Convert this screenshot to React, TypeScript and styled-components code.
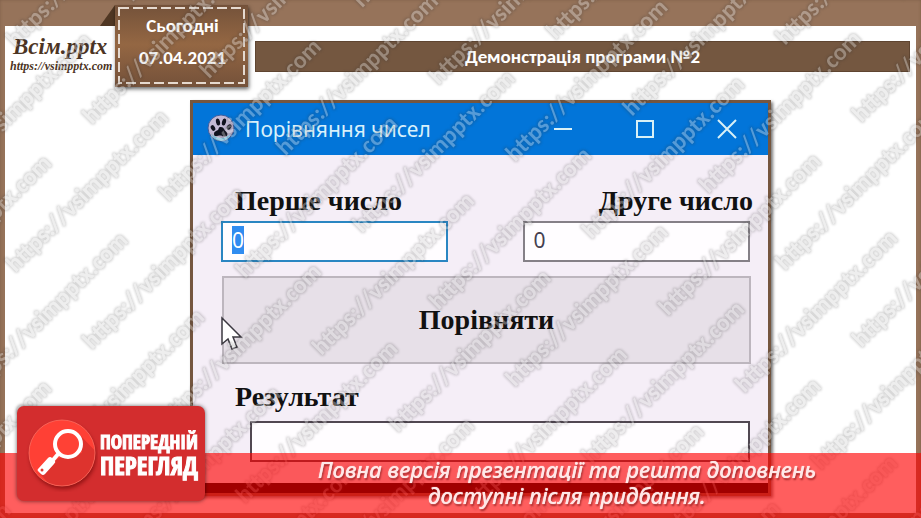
import React, { useEffect, useRef } from "react";
import styled, { createGlobalStyle } from "styled-components";

const GlobalStyle = createGlobalStyle`
  * { box-sizing: border-box; }
  body { margin: 0; background: #96735a; }
`;

const Page = styled.div`
  position: relative;
  display: flex;
  flex-direction: column;
  min-height: 100vh;
  padding: 26px 5px 5px;
  overflow: hidden;
  background: #96735a;
  box-shadow: inset 0 0 3px #7d5e47;
`;

const Slide = styled.main`
  flex: 1;
  background: #fff;
`;

const Header = styled.header`
  display: grid;
  grid-template-columns: 95px 15px 133px 1fr;
  align-items: start;
  height: 74px;
  padding-right: 6px;
`;

const Logo = styled.a`
  display: flex;
  flex-direction: column;
  padding: 9px 0 0 5px;
  color: #4c3423;
  font-family: "Liberation Serif", serif;
  font-style: italic;
  font-weight: bold;
  text-decoration: none;
  white-space: nowrap;
`;

const LogoName = styled.span`
  padding-left: 3px;
  font-size: 23px;
  line-height: 24px;
`;

const LogoUrl = styled.span`
  font-size: 12px;
  line-height: 14px;
`;

const Fold = styled.svg`
  width: 15px;
  height: 21px;
  margin-top: -21px;
`;

const Ribbon = styled.div`
  height: 82px;
  margin-top: -21px;
  padding: 2px 3px 3px;
  background: linear-gradient(#74523a, #946743 48%, #74513a);
  box-shadow: 1px 2px 4px #0009;
`;

const Stitching = styled.div`
  position: relative;
  display: flex;
  flex-direction: column;
  align-items: center;
  height: 100%;
  padding: 3px 0 0 2px;
  color: #fff;
  font: bold 19px/32px Carlito, Lato, "Open Sans", sans-serif;
`;

const Stitches = styled.svg`
  position: absolute;
  inset: 0;
  width: 100%;
  height: 100%;
`;

const Heading = styled.h1`
  margin: 15px 0 0 7px;
  height: 31px;
  border: 1px solid #5f4531;
  background: #745740;
  color: #fff;
  font: bold 19px/29px Carlito, Lato, "Open Sans", sans-serif;
  text-align: center;
`;

const Stage = styled.div`
  display: grid;
  grid-template-columns: 185fr 581fr 145fr;
`;

const Window = styled.section`
  grid-column: 2;
  padding-bottom: 10px;
  border: 3px solid #75563f;
  background: #000;
  box-shadow: 2px 2px 3px #0008;
`;

const TitleBar = styled.div`
  display: flex;
  align-items: center;
  height: 52px;
  padding: 0 21px 0 12px;
  background: #0275d9;
  color: #d8f0fb;
`;

const WindowTitle = styled.h2`
  flex: 1;
  margin: 0 0 0 8px;
  font: 400 21px/28px "Noto Sans", sans-serif;
  white-space: nowrap;
`;

const WindowControls = styled.div`
  display: flex;
  gap: 42px;
`;

const ControlButton = styled.button`
  display: block;
  width: 40px;
  height: 40px;
  padding: 0;
  border: 0;
  background: none;
  color: #d8f0f6;

  svg { display: block; margin: auto; }
`;

const Form = styled.form`
  height: 328px;
  padding: 31px 18px 0 28px;
  background: #f5eef7;
  font: bold 28px/30px "Liberation Serif", serif;
  color: #111;
`;

const FieldRow = styled.div`
  display: flex;
  justify-content: space-between;
`;

const Field = styled.div<{ $end?: boolean }>`
  display: flex;
  flex-direction: column;
  gap: 5px;
  width: 43%;
  align-items: ${(p) => (p.$end ? "flex-end" : "flex-start")};
`;

const FieldLabel = styled.label<{ $end?: boolean }>`
  display: block;
  white-space: nowrap;
  ${(p) => (p.$end ? "margin-right: -3px;" : "padding-left: 14px;")}
`;

const TextInput = styled.input<{ $active?: boolean }>`
  display: block;
  width: 100%;
  height: 41px;
  padding: 0 9px 3px;
  border: 2px solid ${(p) => (p.$active ? "#2a86c2" : "#858087")};
  border-radius: 0;
  outline: 0;
  background: #fffdff;
  color: #454050;
  font: 400 21px/26px "Noto Sans", sans-serif;

  &::selection { background: #308cf0; color: #fff; }
`;

const CompareButton = styled.button`
  display: block;
  width: 100%;
  height: 88px;
  margin: 14px 0 18px 1px;
  border: 2px solid #bdb6be;
  border-radius: 0;
  background: #e7e0e8;
  color: #111;
  font: inherit;
`;

const ResultBox = styled.output`
  display: block;
  height: 41px;
  margin: 9px 0 0 29px;
  border: 2px solid #514852;
  background: #fffdff;
`;

const Pointer = styled.svg`
  position: absolute;
  left: 220px;
  top: 316px;
`;

const Watermark = styled.svg`
  position: absolute;
  inset: 0;
  width: 100%;
  height: 100%;
  pointer-events: none;
  font: bold 24px Carlito, Lato, "Open Sans", sans-serif;
`;

const Banner = styled.footer`
  position: absolute;
  left: 0;
  right: 0;
  bottom: 0;
  height: 65px;
  padding: 3px 0 0 213px;
  background: rgba(255, 0, 0, 0.63);
  color: #ffe8e8;
  font: italic 500 22px/26px "Noto Sans", sans-serif;
  text-align: center;
  text-shadow: 0 0 1px #ffe8e8, 1px 2px 2px #6009;
`;

const BannerText = styled.p`
  margin: 0;
`;

const PreviewButton = styled.button`
  position: absolute;
  left: 17px;
  bottom: 17px;
  display: flex;
  align-items: center;
  width: 188px;
  height: 95px;
  padding: 0 4px 0 9px;
  border: 0;
  border-radius: 7px;
  background: #d32d2e;
  box-shadow: 0 0 4px #0009;
  color: #fff;
`;

const PreviewText = styled.span`
  display: flex;
  flex-direction: column;
  margin-left: 2px;
  font: 700 19px/23px Impact, "Open Sans Condensed", "Roboto Condensed", "DejaVu Sans Condensed", sans-serif;
  text-align: left;
  -webkit-text-stroke: 1px #fff;
`;

const PreviewStrong = styled.span`
  font-size: 25px;
`;

const PawIcon = () => (
  <svg width="32" height="32" viewBox="0 0 32 32" aria-hidden="true">
    <circle cx="16" cy="15" r="13" fill="#c3b9d5" stroke="#405c9c" strokeWidth="1" />
    <path d="M6 21q10 8 20 0q-3 7-10 7t-10-7" fill="#86d0ed" />
    <g fill="#10121f">
      <ellipse cx="8" cy="15" rx="2" ry="3" transform="rotate(-30 8 15)" />
      <ellipse cx="13" cy="9" rx="2" ry="3.500" transform="rotate(-12 13 9)" />
      <ellipse cx="19" cy="9" rx="2" ry="3.500" transform="rotate(15 19 9)" />
      <ellipse cx="24" cy="14" rx="2" ry="3" transform="rotate(35 24 14)" />
      <path d="M16 14c3 0 3 3 5 4.500s2 5-1 5-3-1-5-1-6 2-6-1.500 4-3 4.500-5 1-2 2.500-2z" />
    </g>
  </svg>
);

const MagnifierIcon = () => (
  <svg width="72" height="76" viewBox="0 0 72 76" aria-hidden="true">
    <defs>
      <clipPath id="disc"><circle cx="36" cy="37" r="33" /></clipPath>
      <filter id="discShadow" x="-20%" y="-20%" width="140%" height="150%">
        <feDropShadow dx="1" dy="3" stdDeviation="2" floodColor="#600" floodOpacity=".6" />
      </filter>
    </defs>
    <circle cx="36" cy="37" r="33" fill="#ff4135" filter="url(#discShadow)" />
    <path d="M53 18L76 42v34H31L13 57l20-15 9-2 14-3z" fill="#de332e" clipPath="url(#disc)" />
    <circle cx="36" cy="37" r="33" fill="none" stroke="#ff7467" strokeWidth=".7" />
    <circle cx="42" cy="28" r="13" fill="#ff4135" stroke="#fff" strokeWidth="4" />
    <path d="M33 37l-6 7" stroke="#fff" strokeWidth="4" />
    <path d="M22 42Q24 40 26 42L29 45Q30 46 28 48L19 58Q17 60 15 58L12 55Q11 54 12 53z" fill="#fff" />
    <circle cx="16" cy="54" r="1.500" fill="#e33931" />
  </svg>
);

const SITE = "https://vsimpptx.com";

const marks: { x: number; y: number }[] = [];
for (let row = -20; row < 26; row++) {
  for (let col = -16; col < 20; col++) {
    const x = 92 + row * 76.5 + col * 193.5;
    const y = 350 + row * 77 - col * 193.5;
    for (const top of [y, y - 225]) {
      if (x > -150 && x < 1920 && top > 0 && top < 1240) marks.push({ x, y: top });
    }
  }
}

const MarkLayer = () => (
  <>
    {marks.map((m) => (
      <text key={`${m.x},${m.y}`} transform={`translate(${m.x} ${m.y}) rotate(-45)`}>{SITE}</text>
    ))}
  </>
);

export default function App() {
  const first = useRef<HTMLInputElement>(null);

  useEffect(() => {
    first.current?.focus();
    first.current?.select();
  }, []);

  return (
    <Page>
      <GlobalStyle />
      <Slide>
        <Header>
          <Logo href="#">
            <LogoName>Всім.pptx</LogoName>
            <LogoUrl>https://vsimpptx.com</LogoUrl>
          </Logo>
          <Fold viewBox="0 0 15 21" aria-hidden="true"><path d="M15 0V21H0z" fill="#503723" /></Fold>
          <Ribbon>
            <Stitching>
              <Stitches aria-hidden="true">
                <rect x="1" y="1" width="125" height="75" fill="none" stroke="#e5d9cf" strokeWidth="2" strokeDasharray="10 4" />
              </Stitches>
              <span>Сьогодні</span>
              <time dateTime="2021-04-07">07.04.2021</time>
            </Stitching>
          </Ribbon>
          <Heading>Демонстрація програми №2</Heading>
        </Header>
        <Stage>
          <Window>
            <TitleBar>
              <PawIcon />
              <WindowTitle>Порівняння чисел</WindowTitle>
              <WindowControls>
                <ControlButton type="button" aria-label="Згорнути">
                  <svg width="20" height="20"><path d="M1 10H19" stroke="currentColor" strokeWidth="2" /></svg>
                </ControlButton>
                <ControlButton type="button" aria-label="Розгорнути">
                  <svg width="20" height="20"><rect x="2" y="2" width="16" height="16" fill="none" stroke="currentColor" strokeWidth="2" /></svg>
                </ControlButton>
                <ControlButton type="button" aria-label="Закрити">
                  <svg width="20" height="20"><path d="M1 1L19 19M19 1L1 19" stroke="currentColor" strokeWidth="2" /></svg>
                </ControlButton>
              </WindowControls>
            </TitleBar>
            <Form onSubmit={(e) => e.preventDefault()}>
              <FieldRow>
                <Field>
                  <FieldLabel htmlFor="first">Перше число</FieldLabel>
                  <TextInput id="first" ref={first} $active defaultValue="0" />
                </Field>
                <Field $end>
                  <FieldLabel htmlFor="second" $end>Друге число</FieldLabel>
                  <TextInput id="second" defaultValue="0" />
                </Field>
              </FieldRow>
              <CompareButton type="submit">Порівняти</CompareButton>
              <FieldLabel htmlFor="result">Результат</FieldLabel>
              <ResultBox id="result" />
            </Form>
          </Window>
        </Stage>
      </Slide>
      <Pointer width="24" height="36" viewBox="0 0 24 36" aria-hidden="true">
        <path d="M2 2V28L8 23L12 33L17 31L13 21H21z" fill="#fff" stroke="#3b3840" strokeWidth="1.500" />
      </Pointer>
      <Watermark aria-hidden="true">
        <defs>
          <filter id="markEdge" x="0" y="0" width="100%" height="100%" filterUnits="userSpaceOnUse" colorInterpolationFilters="sRGB">
            <feMorphology in="SourceAlpha" operator="dilate" radius="1" result="wide" />
            <feGaussianBlur in="wide" stdDeviation="1" result="soft" />
            <feComposite in="soft" in2="SourceAlpha" operator="out" result="ring" />
            <feFlood floodColor="#303030" floodOpacity=".2" />
            <feComposite in2="ring" operator="in" result="edge" />
            <feFlood floodColor="#d4d4d4" floodOpacity=".4" />
            <feComposite in2="SourceAlpha" operator="in" result="face" />
            <feMerge>
              <feMergeNode in="edge" />
              <feMergeNode in="face" />
            </feMerge>
          </filter>
        </defs>
        <g filter="url(#markEdge)"><MarkLayer /></g>
      </Watermark>
      <Banner>
        <BannerText>Повна версія презентації та решта доповнень</BannerText>
        <BannerText>доступні після придбання.</BannerText>
      </Banner>
      <PreviewButton type="button">
        <MagnifierIcon />
        <PreviewText>
          <span>ПОПЕРЕДНІЙ</span>
          <PreviewStrong>ПЕРЕГЛЯД</PreviewStrong>
        </PreviewText>
      </PreviewButton>
    </Page>
  );
}
